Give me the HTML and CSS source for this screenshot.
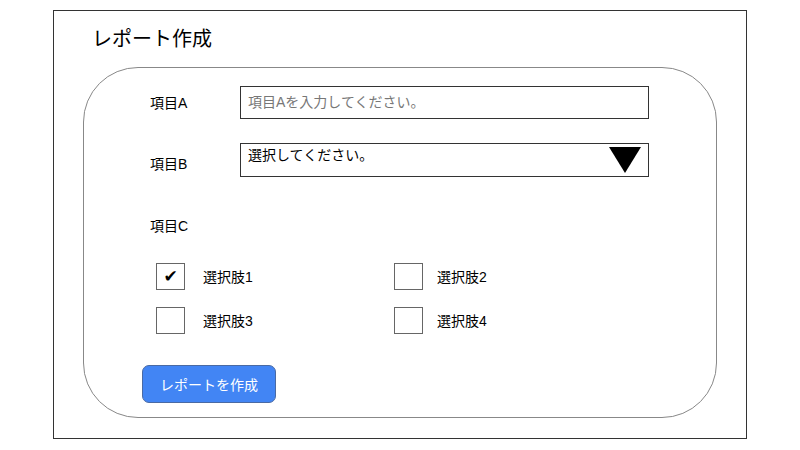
FILE: index.html
```html
<!DOCTYPE html>
<html lang="ja">
<head>
<meta charset="utf-8">
<title>レポート作成</title>
<link rel="stylesheet" href="styles.css">
</head>
<body>
<div class="frame">
  <h1 class="title">レポート作成</h1>
  <div class="panel">
    <div class="row row-a">
      <div class="label">項目A</div>
      <div class="input">項目Aを入力してください。</div>
    </div>
    <div class="row row-b">
      <div class="label label-b">項目B</div>
      <div class="select">
        <span class="select-text">選択してください。</span>
        <svg class="arrow" width="32" height="26" viewBox="0 0 32 26"><polygon points="0,0 32,0 16,26" fill="#000"/></svg>
      </div>
    </div>
    <div class="label label-c">項目C</div>
    <div class="checks">
      <div class="check"><span class="box">✔</span><span class="check-label">選択肢1</span></div>
      <div class="check check-right"><span class="box"></span><span class="check-label">選択肢2</span></div>
      <div class="check"><span class="box"></span><span class="check-label">選択肢3</span></div>
      <div class="check check-right"><span class="box"></span><span class="check-label">選択肢4</span></div>
    </div>
    <button class="btn">レポートを作成</button>
  </div>
</div>
</body>
</html>
```

FILE: styles.css
```css
* { box-sizing: border-box; }
html, body { margin: 0; padding: 0; background: #fff; }
body {
  font-family: "Liberation Sans", "Noto Sans CJK JP", sans-serif;
  color: #000;
}
.frame {
  margin: 10px 0 0 53px;
  width: 694px;
  height: 429px;
  border: 1px solid #333;
  padding: 16px 0 0 38px;
}
.title {
  margin: 0;
  font-size: 20px;
  line-height: 24px;
  font-weight: normal;
}
.panel {
  margin: 16px 0 0 -9px;
  width: 634px;
  height: 351px;
  border: 1px solid #888;
  border-radius: 55px;
  padding: 18px 0 0 66px;
}
.row { display: flex; align-items: center; }
.row-b { margin-top: 24px; }
.label {
  width: 90px;
  font-size: 14px;
  line-height: 20px;
}
.label-b { position: relative; top: 4px; }
.input {
  width: 409px;
  height: 33px;
  border: 1px solid #333;
  padding-left: 7px;
  font-size: 14px;
  line-height: 31px;
  color: #777;
}
.select {
  width: 409px;
  height: 34px;
  border: 1px solid #333;
  padding: 0 7px 0 7px;
  display: flex;
  justify-content: space-between;
  align-items: center;
}
.select-text {
  font-size: 14px;
  line-height: 20px;
  position: relative;
  top: -5px;
}
.arrow { display: block; }
.label-c { margin-top: 39px; }
.checks {
  margin: 27px 0 0 6px;
  display: grid;
  grid-template-columns: 238px 238px;
  row-gap: 17px;
}
.check { display: flex; align-items: center; height: 27px; }
.box {
  width: 29px;
  height: 27px;
  border: 1px solid #666;
  display: flex;
  align-items: center;
  justify-content: center;
  font-size: 17px;
  line-height: 1;
  font-family: "DejaVu Sans", sans-serif;
}
.check-label {
  margin-left: 18px;
  font-size: 14px;
  line-height: 20px;
}
.check-right .check-label { margin-left: 14px; }
.btn {
  margin: 31px 0 0 -8px;
  width: 134px;
  height: 38px;
  background: #4285f4;
  border: 1px solid #4a6aa3;
  border-radius: 7px;
  color: #fff;
  font-family: "Liberation Sans", "Noto Sans CJK JP", sans-serif;
  font-size: 14px;
  padding: 0;
  display: block;
}
```
